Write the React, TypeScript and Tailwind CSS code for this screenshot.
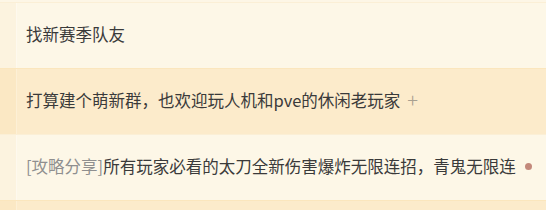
import React from "react";

interface Topic {
  tag?: string;
  title: string;
  mark?: "plus" | "dot";
  active?: boolean;
}

const topics: Topic[] = [
  { title: "找新赛季队友" },
  { title: "打算建个萌新群，也欢迎玩人机和pve的休闲老玩家", mark: "plus", active: true },
  { tag: "[攻略分享]", title: "所有玩家必看的太刀全新伤害爆炸无限连招，青鬼无限连", mark: "dot" },
  { title: "", active: true },
];

const App: React.FC = () => {
  return (
    <div
      className="w-[546px] h-[210px] overflow-hidden bg-[#fdf6e6] pt-[2px]"
      style={{ fontFamily: '"Noto Sans CJK SC", "Microsoft YaHei", sans-serif' }}
    >
      {topics.map((t, i) => (
        <div
          key={i}
          className={
            t.active
              ? "flex h-[66px] bg-[#fcebcb] border-t border-[#fbe6bd]"
              : "flex h-[66px] bg-[#fdf7e7] border-t border-[#fbefd6]"
          }
        >
          <div
            className={
              t.active
                ? "w-[17px] shrink-0 bg-[#fbe8c4] border-r border-[#fdf0d6]"
                : "w-[17px] shrink-0 bg-[#fcf3df] border-r border-[#fef9ee]"
            }
          />
          <div className="flex items-center pl-[9px] pb-[3px] text-[16.5px] text-[#3a3a3a] whitespace-nowrap">
            {t.tag && <span className="text-[#8f8f8f]">{t.tag}</span>}
            <span>{t.title}</span>
            {t.mark === "plus" && (
              <span className="ml-[7px] text-[#a8a090] text-[20px] font-light leading-none">+</span>
            )}
            {t.mark === "dot" && (
              <span className="ml-[9px] inline-block w-[7px] h-[7px] rounded-full bg-[#c3897b]" />
            )}
          </div>
        </div>
      ))}
    </div>
  );
};

export default App;
